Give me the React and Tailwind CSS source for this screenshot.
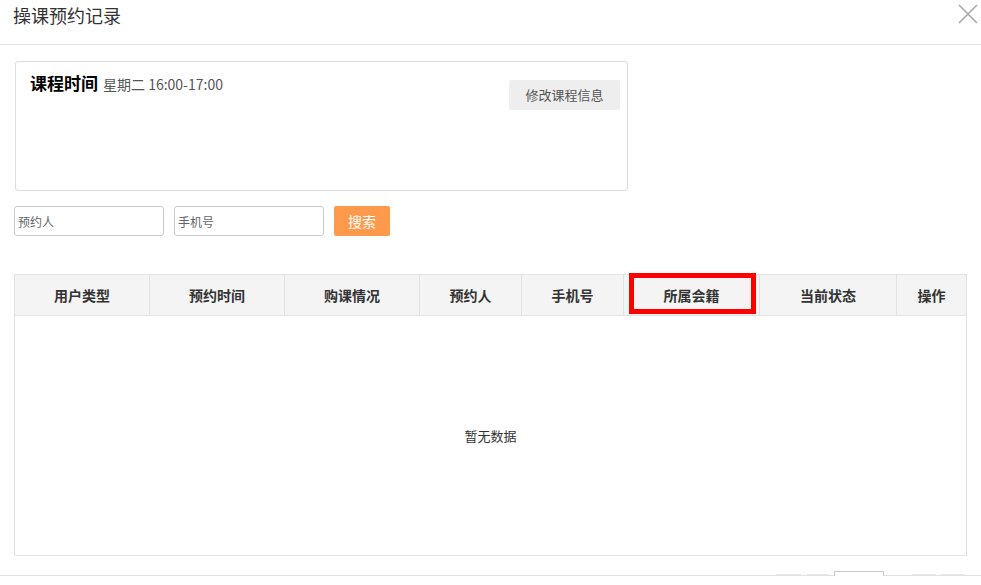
import React from "react";

const cols = ["用户类型", "预约时间", "购课情况", "预约人", "手机号", "所属会籍", "当前状态", "操作"];

export default function App() {
  return (
    <div
      className="relative w-[981px] h-[585px] overflow-hidden bg-white text-[#333]"
      style={{ fontFamily: '"Noto Sans CJK SC", "Noto Sans", sans-serif' }}
    >
      {/* Header */}
      <div className="h-[45px] border-b border-[#e5e5e5] flex items-center justify-between pl-[13px] pr-[3px]">
        <div className="text-[18px] leading-[24px] text-[#333] -mt-[14px]">操课预约记录</div>
        <svg width="20" height="20" viewBox="0 0 20 20" className="-mt-[16px]">
          <path d="M1 1 L19 19 M19 1 L1 19" stroke="#a8a8a8" strokeWidth="1.6" fill="none" />
        </svg>
      </div>

      <div className="px-[14px]">
        {/* Card */}
        <div className="mt-[16px] ml-[1px] w-[613px] h-[130px] border border-[#dcdcdc] rounded-[3px] flex justify-between">
          <div className="pl-[14px] pt-[9px] flex items-baseline gap-[5px]">
            <span className="text-[17px] font-bold text-black leading-[24px]">课程时间</span>
            <span className="text-[14px] text-[#555] leading-[24px]">星期二 16:00-17:00</span>
          </div>
          <button className="mt-[18px] mr-[7px] w-[111px] h-[30px] bg-[#eeeeee] text-[13px] text-[#555] rounded-[2px]">
            修改课程信息
          </button>
        </div>

        {/* Search row */}
        <div className="mt-[15px] flex gap-[10px]">
          <input
            placeholder="预约人"
            className="w-[150px] h-[30px] border border-[#c9c9c9] rounded-[3px] px-[3px] text-[12px] placeholder:text-[#666] outline-none"
          />
          <input
            placeholder="手机号"
            className="w-[150px] h-[30px] border border-[#c9c9c9] rounded-[3px] px-[3px] text-[12px] placeholder:text-[#666] outline-none"
          />
          <button className="w-[56px] h-[30px] bg-[#ff9a4d] text-white text-[14px] rounded-[2px]">搜索</button>
        </div>

        {/* Table */}
        <div className="relative mt-[38px] w-[953px] border border-[#e2e2e2]">
          <div className="grid grid-cols-[135px_135px_135px_102px_102px_136px_137px_1fr] h-[41px] bg-[#f4f4f4] border-b border-[#e2e2e2]">
            {cols.map((c, i) => (
              <div
                key={c}
                className={
                  "flex items-center justify-center text-[14px] font-bold text-[#333] " +
                  (i < cols.length - 1 ? "border-r border-[#e2e2e2]" : "")
                }
              >
                {c}
              </div>
            ))}
          </div>
          <div className="h-[239px] flex items-center justify-center text-[13px] text-[#333]">暂无数据</div>
          <div className="absolute left-[614px] top-[-2px] w-[127px] h-[41px] border-[5px] border-[#ff0000]" />
        </div>
      </div>

      {/* Footer line + pagination (cut off by the bottom of the view) */}
      <div className="absolute left-0 right-0 top-[575px] border-t border-[#e2e2e2]" />
      <div className="absolute top-[571px] left-[776px] flex items-start">
        <div className="mt-[3px] w-[25px] h-[1px] bg-[#e8e8e8]" />
        <div className="mt-[3px] ml-[6px] w-[22px] h-[1px] bg-[#e8e8e8]" />
        <div className="ml-[5px] w-[50px] h-[5px] border border-b-0 border-[#c9c9c9] bg-white" />
        <div className="mt-[3px] ml-[28px] w-[24px] h-[1px] bg-[#e8e8e8]" />
        <div className="mt-[3px] ml-[5px] w-[24px] h-[1px] bg-[#e8e8e8]" />
      </div>
    </div>
  );
}
